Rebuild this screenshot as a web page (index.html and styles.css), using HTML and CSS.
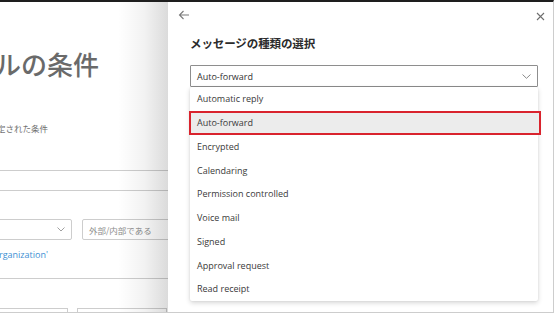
FILE: index.html
```html
<!DOCTYPE html>
<html lang="ja">
<head>
    <meta charset="UTF-8">
    <meta name="viewport" content="width=device-width, initial-scale=1.0">
    <title>メッセージの種類の選択</title>
    <link rel="stylesheet" href="styles.css">
</head>
<body>
    <div class="screen">
        <section class="page" aria-hidden="true">
            <h1 class="page-title">ルの条件</h1>
            <p class="page-note">定された条件</p>
            <div class="page-field"></div>
            <div class="page-row">
                <div class="page-select">
                    <svg class="chevron" width="8" height="5" viewBox="0 0 8 5"><path d="M0.5 0.5 L4 4 L7.5 0.5" fill="none" stroke="#a0a0a0" stroke-width="1"/></svg>
                </div>
                <div class="page-input">外部/内部である</div>
            </div>
            <a class="page-link">rganization'</a>
            <div class="page-rule"></div>
            <div class="page-bottom">
                <div class="page-stub"></div>
                <div class="page-stub page-stub--wide"></div>
            </div>
        </section>

        <aside class="panel">
            <div class="panel__bar">
                <svg class="icon-back" width="12" height="10" viewBox="0 0 12 10"><path d="M11 5 H1.5 M5.5 1 L1.5 5 L5.5 9" fill="none" stroke="#7a7a7a" stroke-width="1.1"/></svg>
                <svg class="icon-close" width="9" height="9" viewBox="0 0 9 9"><path d="M1 1 L8 8 M8 1 L1 8" fill="none" stroke="#6e6e6e" stroke-width="1.1"/></svg>
            </div>
            <h2 class="panel__title">メッセージの種類の選択</h2>

            <div class="select">
                <span>Auto-forward</span>
                <svg class="chevron" width="9" height="5" viewBox="0 0 9 5"><path d="M0.5 0.5 L4.5 4.3 L8.5 0.5" fill="none" stroke="#8a8a8a" stroke-width="1"/></svg>
            </div>
            <ul class="options">
                <li class="option">Automatic reply</li>
                <li class="option option--selected">Auto-forward</li>
                <li class="option">Encrypted</li>
                <li class="option">Calendaring</li>
                <li class="option">Permission controlled</li>
                <li class="option">Voice mail</li>
                <li class="option">Signed</li>
                <li class="option">Approval request</li>
                <li class="option">Read receipt</li>
            </ul>
        </aside>
    </div>
</body>
</html>
```

FILE: styles.css
```css
:root {
    --text: #323232;
    --muted: #6b6b6b;
    --line: #cdcdcd;
    --link: #3d8fd3;
    --red: #d9232d;
    --font-ui: "Segoe UI", "Open Sans", "Noto Sans CJK JP", sans-serif;
    --font-jp: "Noto Sans CJK JP", sans-serif;
}

* {
    box-sizing: border-box;
}

body {
    margin: 0;
    background: #fff;
    font-family: var(--font-ui);
    color: var(--text);
}

.screen {
    width: 554px;
    height: 313px;
    display: flex;
    border-top: 2px solid #1e1e1e;
    border-right: 1px solid var(--line);
    border-bottom: 1px solid var(--line);
    overflow: hidden;
}

/* Página de fondo (recortada) */
.page {
    position: relative;
    width: 168px;
    flex: none;
    overflow: hidden;
    color: var(--muted);
}

.page::after {
    content: "";
    position: absolute;
    inset: 0;
    background: linear-gradient(to right, rgba(0,0,0,0) 70%, rgba(0,0,0,0.05) 86%, rgba(0,0,0,0.14) 100%);
    pointer-events: none;
}

.page-title {
    margin: 46px 0 0 -5px;
    font-family: var(--font-jp);
    font-size: 26px;
    line-height: 32px;
    font-weight: 500;
    color: #6a6a6a;
    white-space: nowrap;
}

.page-note {
    margin: 42px 0 0 -3px;
    font-family: var(--font-jp);
    font-size: 8.5px;
    line-height: 12px;
    color: #6f6f6f;
    white-space: nowrap;
}

.page-field {
    height: 21px;
    margin-top: 36px;
    border-top: 1px solid var(--line);
    border-bottom: 1px solid var(--line);
}

.page-row {
    display: flex;
    gap: 10px;
    margin-top: 28px;
    height: 21px;
}

.page-select {
    flex: none;
    width: 74px;
    margin-left: -2px;
    display: flex;
    align-items: center;
    justify-content: flex-end;
    padding-right: 6px;
    border: 1px solid var(--line);
    border-radius: 2px;
}

.page-input {
    flex: none;
    width: 110px;
    padding-left: 6px;
    display: flex;
    align-items: center;
    border: 1px solid var(--line);
    border-radius: 2px;
    font-family: var(--font-jp);
    font-size: 8.5px;
    color: #8c8c8c;
    white-space: nowrap;
}

.page-link {
    display: block;
    margin: 9px 0 0 -1px;
    font-size: 9px;
    line-height: 12px;
    color: var(--link);
    white-space: nowrap;
}

.page-rule {
    margin-top: 17px;
    border-top: 1px solid var(--line);
}

.page-bottom {
    display: flex;
    gap: 9px;
    margin-top: 29px;
}

.page-stub {
    flex: none;
    width: 68px;
    height: 6px;
    border-top: 1px solid var(--line);
    border-right: 1px solid var(--line);
}

.page-stub--wide {
    width: 90px;
    border-left: 1px solid var(--line);
}

/* Panel lateral */
.panel {
    flex: 1;
    min-width: 0;
    padding: 0 15px 0 22px;
    background: #fff;
}

.panel__bar {
    display: flex;
    align-items: center;
    justify-content: space-between;
    height: 26px;
    margin: 0 -7px 0 -12px;
}

.icon-back {
    margin-top: -1px;
}

.icon-close {
    margin-top: 2px;
}

.panel__title {
    margin: 6px 0 0;
    font-family: var(--font-jp);
    font-size: 11.5px;
    line-height: 18px;
    font-weight: 700;
    color: #2b2b2b;
    letter-spacing: -0.1px;
}

.select {
    display: flex;
    align-items: center;
    justify-content: space-between;
    height: 22px;
    margin-top: 13px;
    padding: 0 6px 0 6px;
    border: 1px solid #8e8e8e;
    border-radius: 1px;
    font-size: 9px;
    color: #333;
}

.options {
    list-style: none;
    margin: 0;
    padding: 0;
    background: #fff;
    box-shadow: 0 2px 5px rgba(0,0,0,0.16), 0 0 2px rgba(0,0,0,0.08);
    border-radius: 2px;
}

.option {
    height: 23.75px;
    display: flex;
    align-items: center;
    padding-left: 7px;
    font-size: 9px;
    color: #3a3a3a;
}

.option--selected {
    margin: 0 -3px 0 -1px;
    padding-left: 6px;
    background: #ececec;
    border: 2px solid var(--red);
}
```
